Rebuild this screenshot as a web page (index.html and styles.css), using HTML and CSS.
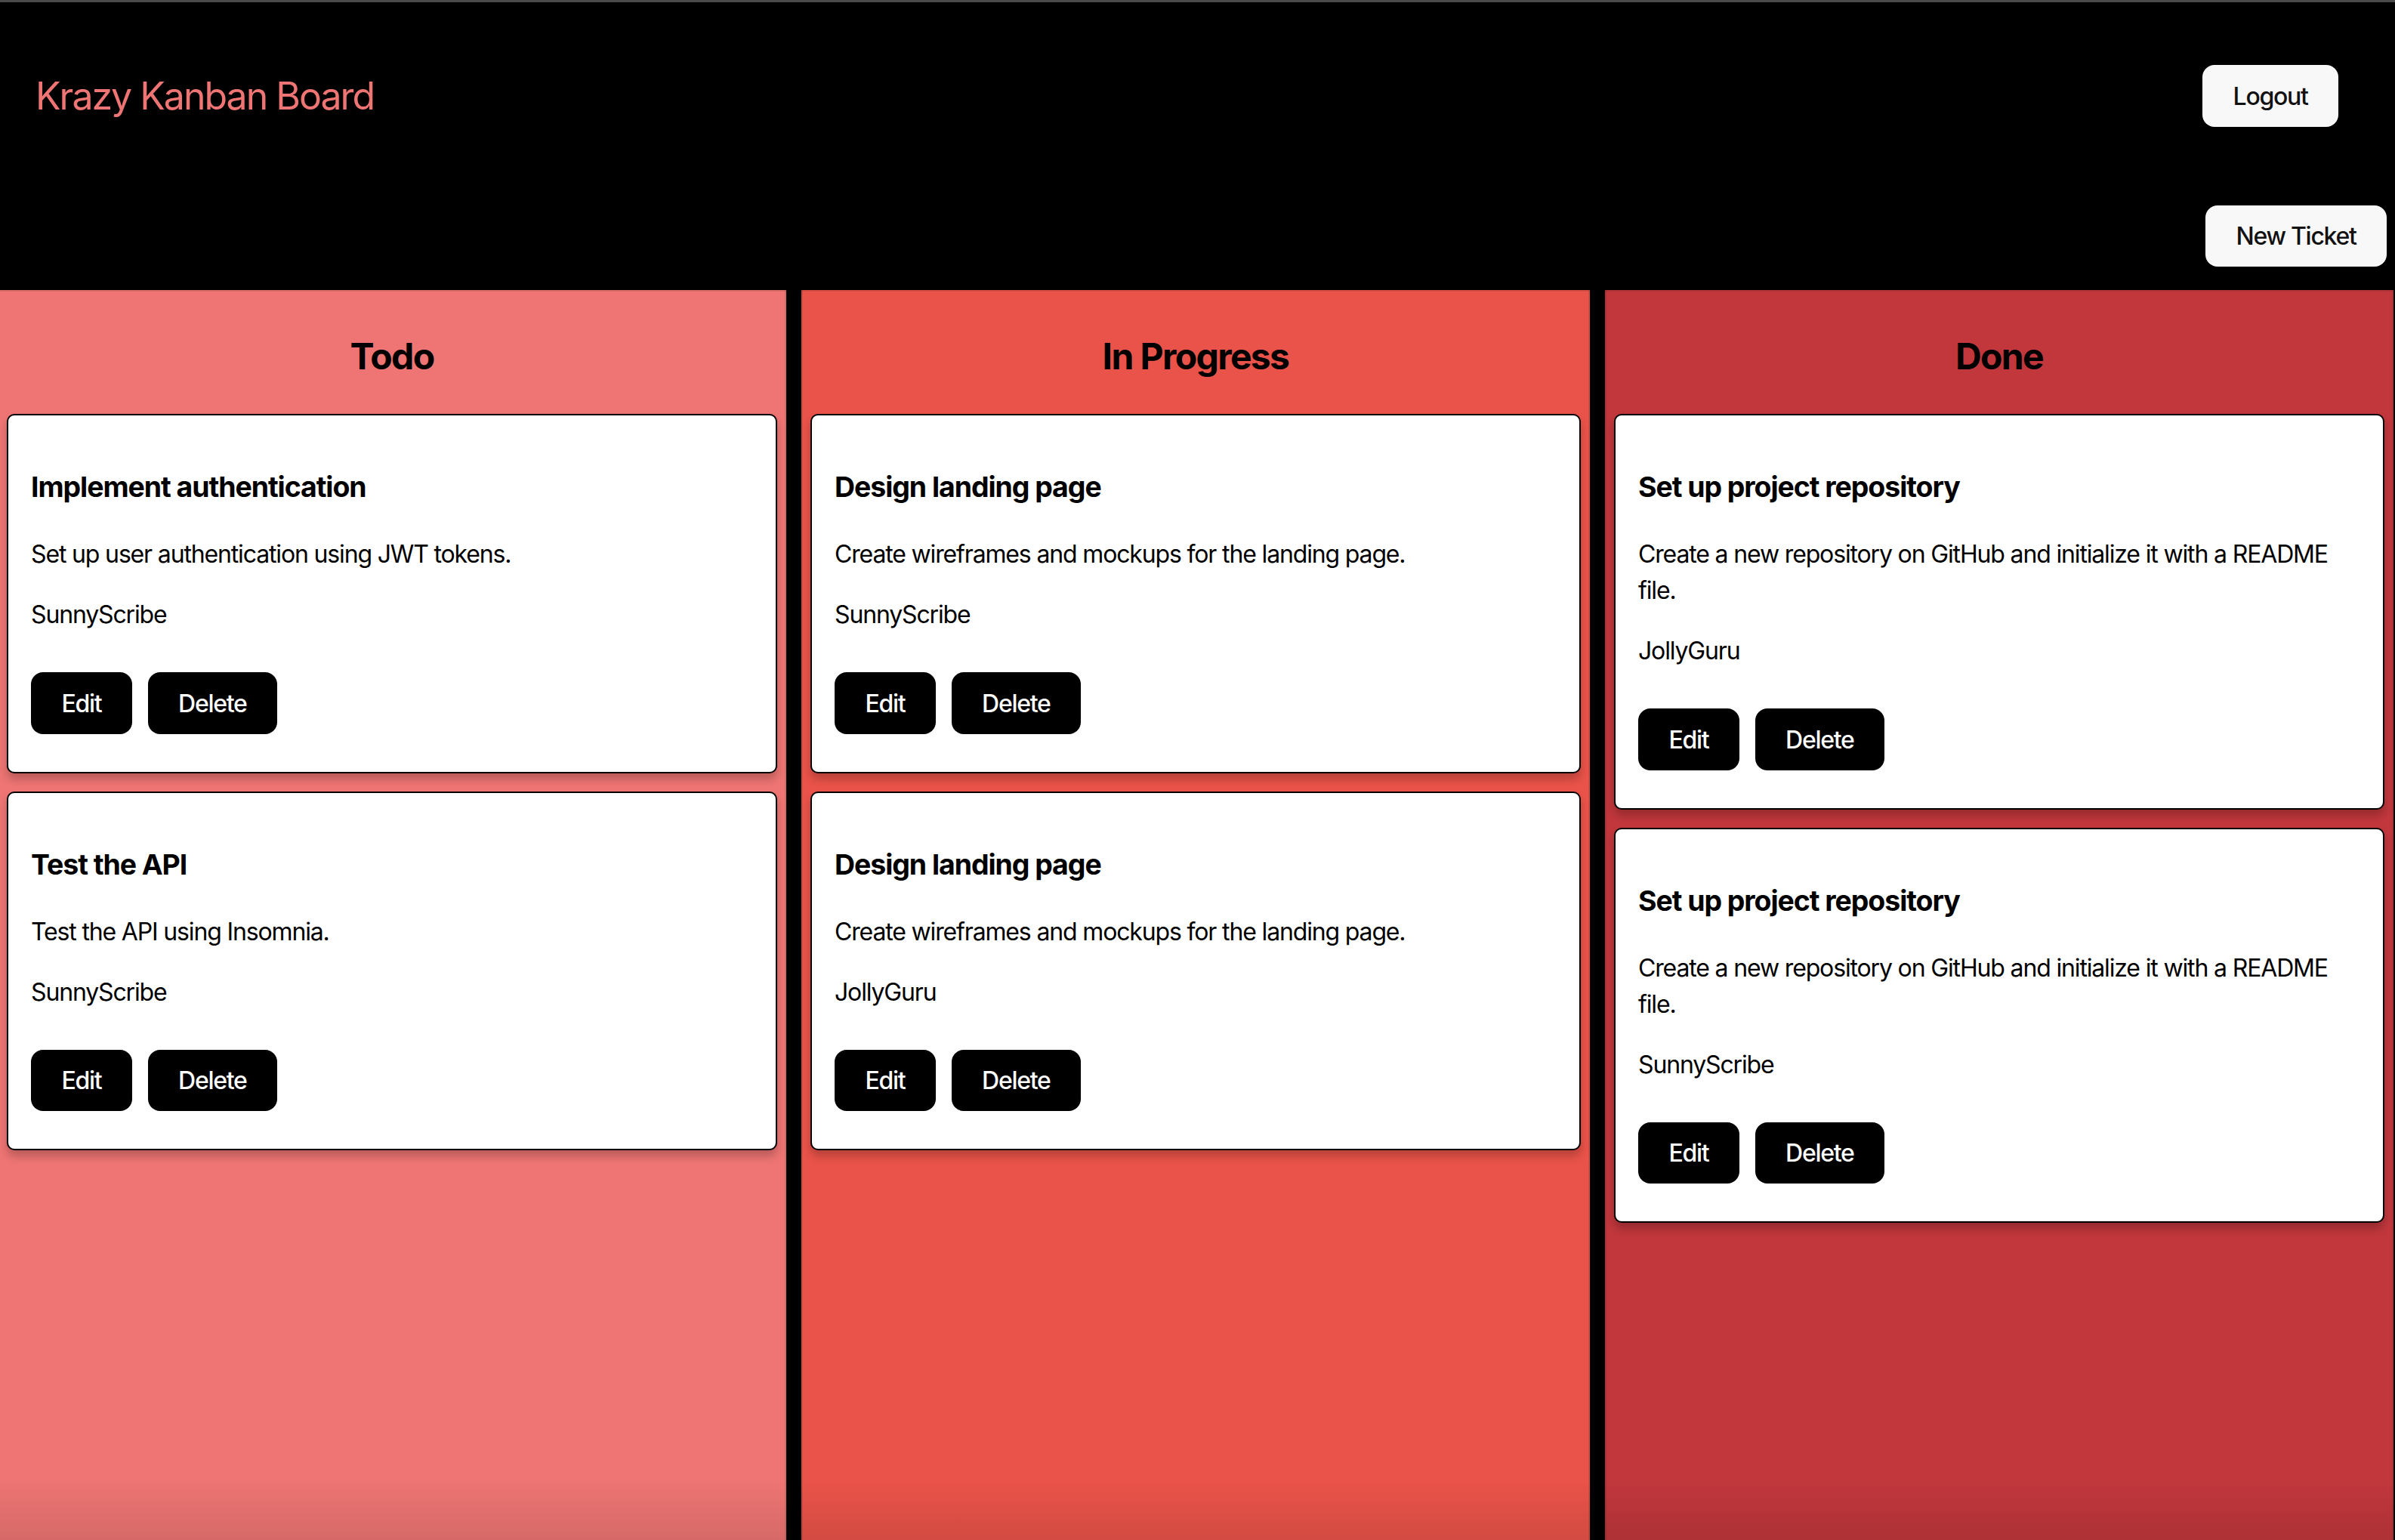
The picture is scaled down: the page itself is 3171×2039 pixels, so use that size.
FILE: index.html
```html
<!DOCTYPE html>
<html lang="en">
<head>
<meta charset="utf-8">
<title>Krazy Kanban Board</title>
<link rel="stylesheet" href="styles.css">
</head>
<body>
  <header class="nav">
    <div class="nav-row nav-top">
      <h1 class="brand">Krazy Kanban Board</h1>
      <button class="btn btn-light" type="button">Logout</button>
    </div>
    <div class="nav-row nav-bottom">
      <button class="btn btn-light" type="button">New Ticket</button>
    </div>
  </header>

  <main class="board">
    <section class="lane lane-todo">
      <h2 class="lane-title">Todo</h2>
      <div class="cards">
        <article class="ticket">
          <h3 class="ticket-title">Implement authentication</h3>
          <p class="ticket-text">Set up user authentication using JWT tokens.</p>
          <p class="ticket-text">SunnyScribe</p>
          <div class="ticket-actions">
            <button class="btn btn-dark" type="button">Edit</button>
            <button class="btn btn-dark" type="button">Delete</button>
          </div>
        </article>
        <article class="ticket">
          <h3 class="ticket-title">Test the API</h3>
          <p class="ticket-text">Test the API using Insomnia.</p>
          <p class="ticket-text">SunnyScribe</p>
          <div class="ticket-actions">
            <button class="btn btn-dark" type="button">Edit</button>
            <button class="btn btn-dark" type="button">Delete</button>
          </div>
        </article>
      </div>
    </section>

    <section class="lane lane-progress">
      <h2 class="lane-title">In Progress</h2>
      <div class="cards">
        <article class="ticket">
          <h3 class="ticket-title">Design landing page</h3>
          <p class="ticket-text">Create wireframes and mockups for the landing page.</p>
          <p class="ticket-text">SunnyScribe</p>
          <div class="ticket-actions">
            <button class="btn btn-dark" type="button">Edit</button>
            <button class="btn btn-dark" type="button">Delete</button>
          </div>
        </article>
        <article class="ticket">
          <h3 class="ticket-title">Design landing page</h3>
          <p class="ticket-text">Create wireframes and mockups for the landing page.</p>
          <p class="ticket-text">JollyGuru</p>
          <div class="ticket-actions">
            <button class="btn btn-dark" type="button">Edit</button>
            <button class="btn btn-dark" type="button">Delete</button>
          </div>
        </article>
      </div>
    </section>

    <section class="lane lane-done">
      <h2 class="lane-title">Done</h2>
      <div class="cards">
        <article class="ticket">
          <h3 class="ticket-title">Set up project repository</h3>
          <p class="ticket-text">Create a new repository on GitHub and initialize it with a README file.</p>
          <p class="ticket-text">JollyGuru</p>
          <div class="ticket-actions">
            <button class="btn btn-dark" type="button">Edit</button>
            <button class="btn btn-dark" type="button">Delete</button>
          </div>
        </article>
        <article class="ticket">
          <h3 class="ticket-title">Set up project repository</h3>
          <p class="ticket-text">Create a new repository on GitHub and initialize it with a README file.</p>
          <p class="ticket-text">SunnyScribe</p>
          <div class="ticket-actions">
            <button class="btn btn-dark" type="button">Edit</button>
            <button class="btn btn-dark" type="button">Delete</button>
          </div>
        </article>
      </div>
    </section>
  </main>
</body>
</html>
```

FILE: styles.css
```css
* {
  box-sizing: border-box;
}

html,
body {
  margin: 0;
  padding: 0;
}

body {
  background: #000;
  color: #000;
  font-family: Inter, "Noto Sans", "Liberation Sans", sans-serif;
  font-size: 32px;
  line-height: 1.5;
  letter-spacing: -0.036em;
  border-top: 3px solid #4a4a4a;
  min-height: 100vh;
  display: flex;
  flex-direction: column;
  overflow: hidden;
}

/* ---------- header ---------- */
.nav {
  background: #000;
  padding-top: 84px;
  padding-bottom: 31px;
}

.nav-row {
  display: flex;
  align-items: center;
}

.nav-top {
  justify-content: space-between;
  padding-left: 47px;
  padding-right: 75px;
  height: 80px;
}

.nav-bottom {
  justify-content: flex-end;
  margin-top: 105px;
  padding-right: 11px;
}

.brand {
  margin: 0;
  font-size: 50px;
  font-weight: 400;
  line-height: 1.2;
  letter-spacing: -0.04em;
  color: #ee7573;
}

/* ---------- buttons ---------- */
.btn {
  font-family: inherit;
  font-size: 32px;
  font-weight: 500;
  line-height: normal;
  letter-spacing: -0.04em;
  padding: 19.2px 38.4px;
  border: 2px solid transparent;
  border-radius: 16px;
  cursor: pointer;
}

.btn-light {
  background: #f9f8f8;
  color: #111;
}

.btn-dark {
  background: #000;
  color: #fff;
}

/* ---------- board ---------- */
.board {
  flex: 1;
  display: flex;
  gap: 20px;
  width: 3172px;
  margin-left: -3px;
}

.lane {
  flex: 1 1 0;
  padding: 12px;
  box-shadow:
    inset 0 2px 0 rgba(0, 0, 0, 0.09),
    inset 2px 0 0 rgba(0, 0, 0, 0.09),
    inset -2px 0 0 rgba(0, 0, 0, 0.09);
  background-image: linear-gradient(to bottom, rgba(0, 0, 0, 0) calc(100% - 80px), rgba(0, 0, 0, 0.1));
}

.lane-todo {
  background-color: #ee7573;
}

.lane-progress {
  background-color: #ea5349;
}

.lane-done {
  background-color: #c1373c;
}

.lane-title {
  margin: 40px 0 40px;
  text-align: center;
  font-size: 48px;
  font-weight: 700;
  line-height: 72px;
  letter-spacing: -0.034em;
}

.cards {
  display: flex;
  flex-direction: column;
  gap: 24px;
}

.ticket {
  background: #fff;
  border: 2px solid #000;
  border-radius: 10px;
  padding: 30px;
  box-shadow: 0 8px 12px rgba(0, 0, 0, 0.22);
}

.ticket-title {
  margin: 37px 0;
  font-size: 37.44px;
  font-weight: 700;
  line-height: 56px;
  letter-spacing: -0.028em;
}

.ticket-text {
  margin: 32px 0;
  font-size: 32px;
  line-height: 48px;
}

.ticket-actions {
  display: flex;
  gap: 21px;
  margin: 52px 0 20px;
}
```
